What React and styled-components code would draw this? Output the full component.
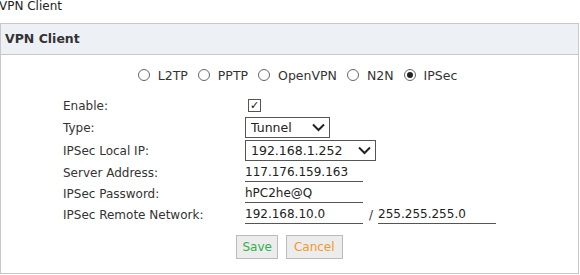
import React, { useState } from 'react';
import styled, { createGlobalStyle } from 'styled-components';

const GlobalStyle = createGlobalStyle`
  body {
    margin: 0;
    font-family: "DejaVu Sans", Verdana, sans-serif;
    font-size: 12px;
    color: #333;
    background: #fff;
  }
`;

const protocols = ['L2TP', 'PPTP', 'OpenVPN', 'N2N', 'IPSec'];

const App = () => {
  const [proto, setProto] = useState('IPSec');

  return (
    <Page>
      <GlobalStyle />
      <PageTitle>VPN Client</PageTitle>
      <Panel>
        <PanelHeader>VPN Client</PanelHeader>
        <PanelBody>
          <RadioRow>
            {protocols.map((p) => (
              <RadioLabel key={p}>
                <Radio checked={proto === p} onClick={() => setProto(p)} />
                {p}
              </RadioLabel>
            ))}
          </RadioRow>
          <Form>
            <Label>Enable:</Label>
            <Field><Check>✓</Check></Field>
            <Label tall>Type:</Label>
            <Field tall>
              <Select width="85px">Tunnel<Chevron /></Select>
            </Field>
            <Label tall>IPSec Local IP:</Label>
            <Field tall>
              <Select width="131px">192.168.1.252<Chevron /></Select>
            </Field>
            <Label>Server Address:</Label>
            <Field><Line>117.176.159.163</Line></Field>
            <Label>IPSec Password:</Label>
            <Field><Line>hPC2he@Q</Line></Field>
            <Label>IPSec Remote Network:</Label>
            <Field>
              <Line>192.168.10.0</Line>
              <Slash>/</Slash>
              <Line>255.255.255.0</Line>
            </Field>
          </Form>
          <Buttons>
            <Button color="#2fb34a">Save</Button>
            <Button color="#f39a2b" wide>Cancel</Button>
          </Buttons>
        </PanelBody>
      </Panel>
    </Page>
  );
};

const Chevron = () => (
  <svg width="13" height="9" viewBox="0 0 13 9">
    <path d="M1 1.5 L6.5 7 L12 1.5" fill="none" stroke="#222" strokeWidth="2" />
  </svg>
);

const Page = styled.div`
  width: 580px;
`;

const PageTitle = styled.div`
  height: 23px;
  line-height: 12px;
  margin-left: -1px;
  font-size: 12px;
  color: #222;
`;

const Panel = styled.div`
  width: 577px;
  border: 1px solid #c8c8c8;
`;

const PanelHeader = styled.div`
  height: 30px;
  line-height: 30px;
  padding-left: 4px;
  background: #edf1f5;
  border-bottom: 1px solid #c8c8c8;
  font-weight: bold;
  font-size: 12.5px;
  color: #333;
`;

const PanelBody = styled.div`
  height: 218px;
  padding-top: 12px;
  box-sizing: border-box;
`;

const RadioRow = styled.div`
  display: flex;
  justify-content: center;
  gap: 10px;
  padding-left: 16px;
  height: 16px;
  align-items: center;
`;

const RadioLabel = styled.label`
  display: flex;
  align-items: center;
  gap: 8px;
  font-size: 12.5px;
  color: #333;
`;

const Radio = styled.span`
  width: 12px;
  height: 12px;
  border-radius: 50%;
  border: 1px solid #666;
  box-sizing: border-box;
  display: inline-flex;
  align-items: center;
  justify-content: center;
  &::after {
    content: '';
    width: 6px;
    height: 6px;
    border-radius: 50%;
    background: ${(p) => (p.checked ? '#222' : 'transparent')};
  }
`;

const Form = styled.div`
  display: grid;
  grid-template-columns: 182px 1fr;
  margin: 12px 0 0 62px;
`;

const Label = styled.div`
  display: flex;
  align-items: center;
  height: ${(p) => (p.tall ? '23px' : '21px')};
  color: #333;
`;

const Field = styled.div`
  display: flex;
  align-items: center;
  height: ${(p) => (p.tall ? '23px' : '21px')};
`;

const Check = styled.span`
  width: 13px;
  height: 13px;
  margin-left: 3px;
  border: 1px solid #555;
  box-sizing: border-box;
  font-size: 11px;
  line-height: 11px;
  text-align: center;
  color: #111;
  font-weight: bold;
`;

const Select = styled.div`
  width: ${(p) => p.width};
  height: 21px;
  box-sizing: border-box;
  border: 1px solid #555;
  display: flex;
  align-items: center;
  justify-content: space-between;
  padding: 0 4px 0 5px;
  font-size: 12.5px;
  color: #222;
`;

const Line = styled.div`
  width: 118px;
  height: 18px;
  box-sizing: border-box;
  border-bottom: 1px solid #555;
  line-height: 17px;
  font-size: 12px;
  color: #222;
`;

const Slash = styled.span`
  margin: 0 5px 0 6px;
  color: #333;
`;

const Buttons = styled.div`
  display: flex;
  justify-content: center;
  gap: 8px;
  margin-top: 10px;
`;

const Button = styled.button`
  height: 24px;
  padding: 0 ${(p) => (p.wide ? '7px' : '5px')};
  border: 1px solid #bbb;
  background: #ececec;
  color: ${(p) => p.color};
  font-family: inherit;
  font-size: 12px;
`;

export default App;
